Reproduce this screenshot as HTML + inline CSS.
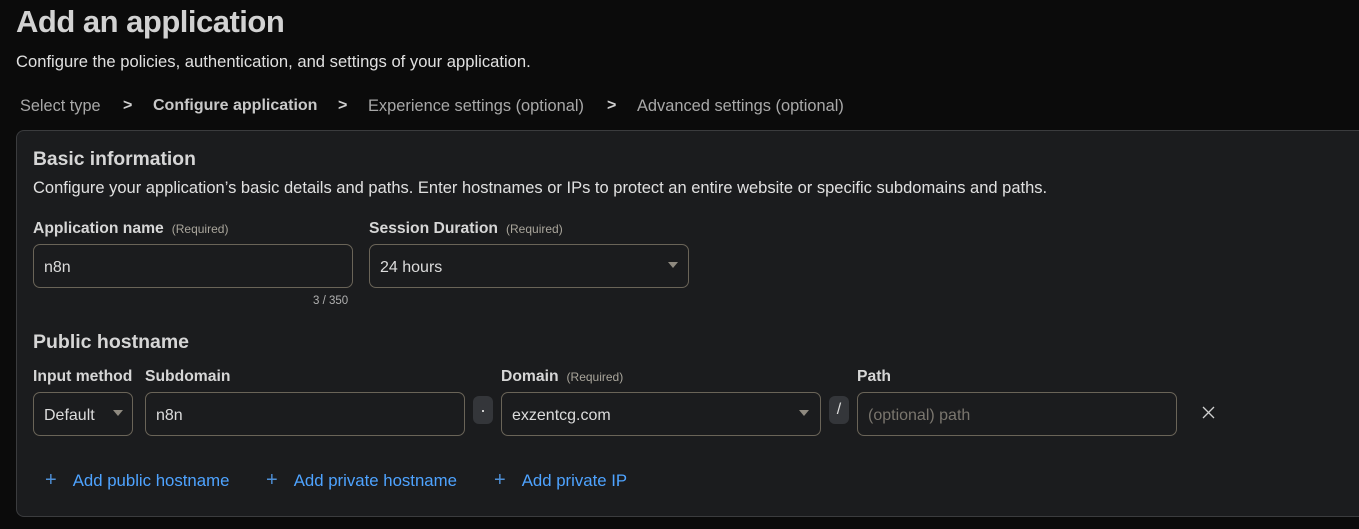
<!DOCTYPE html>
<html><head><meta charset="utf-8"><style>
*{box-sizing:border-box;margin:0;padding:0}
body{width:1359px;height:529px;background:#0b0b0b;font-family:"Liberation Sans",sans-serif;color:#d6d6d6;position:relative;overflow:hidden}
.a{position:absolute;white-space:nowrap}
h1{position:absolute;left:16px;top:4px;font-size:31px;font-weight:bold;color:#d2d2d2;letter-spacing:-0.5px}
.card{position:absolute;left:16px;top:130px;width:1360px;height:387px;background:#1b1c1e;border:1px solid #3b3c3e;border-radius:8px}
.box{position:absolute;border:1px solid #6a6458;border-radius:7px;background:#1b1c1e;font-size:16px;color:#dcdcdc;padding-left:10px;line-height:46px;height:44px}
.lbl{font-size:15.7px;font-weight:bold;color:#d6d6d6}
.req{font-size:12px;font-weight:normal;color:#a9a59b;margin-left:8px}
.tri{position:absolute;width:0;height:0;border-left:5px solid transparent;border-right:5px solid transparent;border-top:6px solid #8f8a80;top:17px}
.sep{position:absolute;width:20px;height:28px;background:#34363a;border-radius:6px;color:#ddd;text-align:center;font-size:16px;line-height:28px}
.link{position:absolute;top:469px;font-size:16.8px;color:#4ea3ff}
.link span{font-size:20px;font-weight:normal;margin-right:16px;color:#4e8fd6}
</style></head><body>
<h1>Add an application</h1>
<div class="a" style="left:16px;top:52px;font-size:16.6px;color:#e0e0e0">Configure the policies, authentication, and settings of your application.</div>
<div class="a" style="left:20px;top:97px;font-size:16.3px;color:#a8a8a8">Select type</div>
<div class="a" style="left:123px;top:97px;font-size:16px;color:#d0d0d0;font-weight:bold">&gt;</div>
<div class="a" style="left:153px;top:97px;font-size:16px;color:#c8c8c8;font-weight:bold">Configure application</div>
<div class="a" style="left:338px;top:97px;font-size:16px;color:#d0d0d0;font-weight:bold">&gt;</div>
<div class="a" style="left:368px;top:97px;font-size:16.4px;color:#a8a8a8">Experience settings (optional)</div>
<div class="a" style="left:607px;top:97px;font-size:16px;color:#d0d0d0;font-weight:bold">&gt;</div>
<div class="a" style="left:637px;top:97px;font-size:16.4px;color:#a8a8a8">Advanced settings (optional)</div>
<div class="card"></div>
<div class="a" style="left:33px;top:149px;font-size:19.3px;font-weight:bold;color:#d6d6d6">Basic information</div>
<div class="a" style="left:33px;top:179px;font-size:16.5px;color:#e0e0e0">Configure your application’s basic details and paths. Enter hostnames or IPs to protect an entire website or specific subdomains and paths.</div>
<div class="a lbl" style="left:33px;top:220px">Application name<span class="req">(Required)</span></div>
<div class="a lbl" style="left:369px;top:220px">Session Duration<span class="req">(Required)</span></div>
<div class="box" style="left:33px;top:244px;width:320px">n8n</div>
<div class="box" style="left:369px;top:244px;width:320px">24 hours<div class="tri" style="right:10px"></div></div>
<div class="a" style="left:313px;top:295px;font-size:11.5px;color:#b0b0b0">3 / 350</div>
<div class="a" style="left:33px;top:331px;font-size:19.5px;font-weight:bold;color:#d6d6d6">Public hostname</div>
<div class="a lbl" style="left:33px;top:368px">Input method</div>
<div class="a lbl" style="left:145px;top:368px">Subdomain</div>
<div class="a lbl" style="left:501px;top:368px">Domain<span class="req">(Required)</span></div>
<div class="a lbl" style="left:857px;top:368px">Path</div>
<div class="box" style="left:33px;top:392px;width:100px">Default<div class="tri" style="right:9px"></div></div>
<div class="box" style="left:145px;top:392px;width:320px">n8n</div>
<div class="sep" style="left:473px;top:396px"><div style="position:absolute;left:9px;top:14px;width:2px;height:2px;background:#ccc"></div></div>
<div class="box" style="left:501px;top:392px;width:320px">exzentcg.com<div class="tri" style="right:11px"></div></div>
<div class="sep" style="left:829px;top:396px">/</div>
<div class="box" style="left:857px;top:392px;width:320px;color:#7a766e">(optional) path</div>
<svg class="a" style="left:1202px;top:406px" width="13" height="13" viewBox="0 0 13 13"><path d="M1 1L12 12M12 1L1 12" stroke="#d0d0d0" stroke-width="1.3"/></svg>
<div class="link" style="left:45px"><span>+</span>Add public hostname</div>
<div class="link" style="left:266px"><span>+</span>Add private hostname</div>
<div class="link" style="left:494px"><span>+</span>Add private IP</div>
</body></html>
